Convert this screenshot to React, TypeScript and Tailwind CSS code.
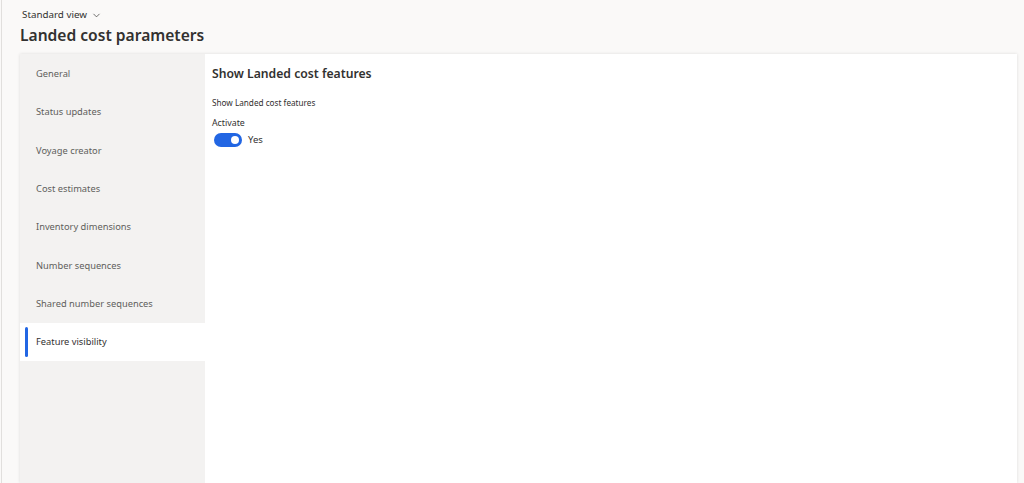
import { ChevronDown } from "lucide-react"

const tabs = [
  "General",
  "Status updates",
  "Voyage creator",
  "Cost estimates",
  "Inventory dimensions",
  "Number sequences",
  "Shared number sequences",
  "Feature visibility",
]

const font = { fontFamily: '"Segoe UI", "Noto Sans", "Open Sans", sans-serif' }

export default function App() {
  const active = "Feature visibility"
  return (
    <div className="flex h-[483px] w-[1024px] overflow-hidden bg-[#faf9f8] text-[#323130]" style={font}>
      <div className="ml-px w-px bg-[#e1dfdd]" />
      <div className="flex min-w-0 flex-1 flex-col pl-[18px] pr-[7px]">
        <div className="h-[54px] pt-[7px]">
          <button className="flex items-center gap-[4px] pl-[2px] text-[9.8px] leading-[16px] text-[#323130]">
            Standard view
            <ChevronDown className="size-[11px]" strokeWidth={1.5} />
          </button>
          <h1 className="text-[15.6px] font-semibold leading-[24px]">Landed cost parameters</h1>
        </div>
        <div className="flex flex-1 shadow-[0_0_3px_rgba(0,0,0,0.12)]">
          <nav className="flex w-[185px] shrink-0 flex-col bg-[#f3f2f1]">
            {tabs.map((tab) => {
              const selected = tab === active
              return (
                <div
                  key={tab}
                  className={
                    selected
                      ? "relative flex h-[38.4px] items-center bg-white pl-[16px] pt-px text-[9.3px] text-[#323130]"
                      : "relative flex h-[38.4px] items-center pl-[16px] pt-px text-[9.3px] text-[#605e5c]"
                  }
                >
                  {selected ? <span className="absolute left-[5px] top-[4px] bottom-[4px] w-[3px] rounded-sm bg-[#2266e3]" /> : null}
                  {tab}
                </div>
              )
            })}
          </nav>
          <section className="flex-1 bg-white pl-[7px] pt-[11px]">
            <h2 className="text-[12.2px] font-semibold leading-[18px]">Show Landed cost features</h2>
            <p className="mt-[14px] text-[8.2px] leading-[12px] text-[#323130]">Show Landed cost features</p>
            <div className="mt-[8px] text-[8.8px] leading-[12px]">Activate</div>
            <div className="mt-[4px] flex items-center gap-[6px] pl-[2px]">
              <span className="flex h-[14px] w-[28px] items-center justify-end rounded-full bg-[#2266e3] pr-[3px]">
                <span className="size-[8px] rounded-full bg-white" />
              </span>
              <span className="text-[9.5px]">Yes</span>
            </div>
          </section>
        </div>
      </div>
    </div>
  )
}
